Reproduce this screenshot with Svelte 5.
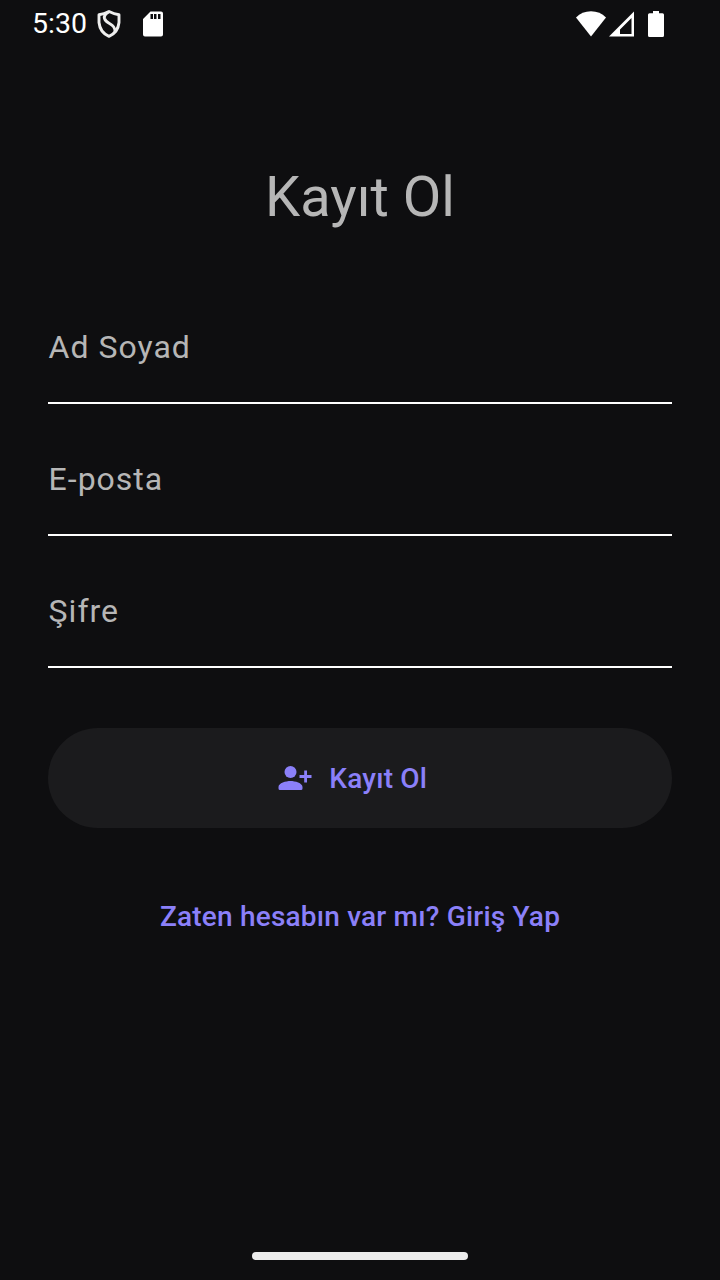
<script>
  const fields = ['Ad Soyad', 'E-posta', 'Şifre'];
</script>

<div class="screen">
  <header>
    <span class="time">5:30</span>
    <svg class="shield" width="24" height="30" viewBox="0 0 24 30"><g fill="none" stroke="#eee" stroke-width="2.9" stroke-linejoin="round"><path d="M12 2.500Q17 5 22 5.800V13.500Q21 23.500 12 27.300Q3 23.500 2 13.500V5.800Q7 5 12 2.500Z"/><path d="M11.500 3Q6.500 6 7.500 9.500Q8.500 12.500 12.500 14.500Q18.500 17.500 18 23"/></g></svg>
    <svg class="sd" width="20" height="26" viewBox="0 0 20 26"><path fill-rule="evenodd" fill="#fff" d="M7.500 .500H18Q20 .500 20 2.500V23.500Q20 25.500 18 25.500H2Q0 25.500 0 23.500V8ZM7.500 3V8H10V3ZM11 3V8H13.500V3ZM15 3V8H17.500V3Z"/></svg>
    <span class="grow"></span>
    <svg width="90" height="28" viewBox="0 0 90 28"><path fill="#fff" d="M0 7.500Q6 1.200 15 1.200Q24 1.200 30 7.500L15 26.500Z"/><path fill="#fff" fill-rule="evenodd" d="M58 1.500V26.500H33ZM55.500 8V24H44V19.500Z"/><path fill="#fff" d="M77 1H83V3.300H86.500Q88 3.300 88 4.800V25.500Q88 27 86.500 27H73.500Q72 27 72 25.500V4.800Q72 3.300 73.500 3.300H77Z"/></svg>
  </header>
  <main>
    <h1>Kayıt Ol</h1>
    {#each fields as field}
      <div class="field">{field}</div>
    {/each}
    <button class="submit">
      <svg width="36" height="36" viewBox="0 0 36 36"><g fill="#8b80f9"><circle cx="13.500" cy="12" r="6"/><path d="M3 30Q1.500 30 1.500 28.500V27C1.500 23 9 21 13.500 21S25.500 23 25.500 27V28.500Q25.500 30 24 30ZM27.200 10.500H30V15H34.500V18H30V22.500H27.200V18H22.500V15H27.200Z"/></g></svg>
      <span>Kayıt Ol</span>
    </button>
    <button class="login">Zaten hesabın var mı? Giriş Yap</button>
  </main>
  <footer></footer>
</div>

<style>
  :global(body) { margin: 0; background: #0e0e10; }
  .screen { width: 720px; height: 1280px; box-sizing: border-box; background: #0e0e10; font-family: Roboto, sans-serif; display: flex; flex-direction: column; align-items: center; }
  header { width: 100%; height: 48px; box-sizing: border-box; padding: 0 54px 0 32px; display: flex; align-items: center; }
  .time { color: #fff; font-size: 28.5px; line-height: 48px; width: 65px; }
  .sd { margin-left: 22px; }
  .grow { flex: 1; }
  main { width: 624px; flex: 1; display: flex; flex-direction: column; }
  h1 { margin: 113px 0 67px; height: 72px; line-height: 72px; font-size: 56px; font-weight: 400; color: #b6b6b6; text-align: center; }
  .field { height: 104px; margin-bottom: 28px; padding-left: 0.6px; box-sizing: border-box; border-bottom: 2px solid #fff; color: #b6b6b6; font-size: 32px; letter-spacing: 1px; line-height: 94px; }
  button { border: 0; font: 500 28px Roboto, sans-serif; letter-spacing: 0.2px; color: #8b80f9; padding: 0; }
  .submit { margin-top: 32px; padding-right: 15.5px; height: 100px; border-radius: 50px; background: #1b1b1d; display: flex; align-items: center; justify-content: center; gap: 16px; }
  .login { margin-top: 40px; height: 96px; background: transparent; }
  footer { width: 216px; height: 8px; margin-bottom: 20px; border-radius: 4px; background: #ececec; }
</style>
